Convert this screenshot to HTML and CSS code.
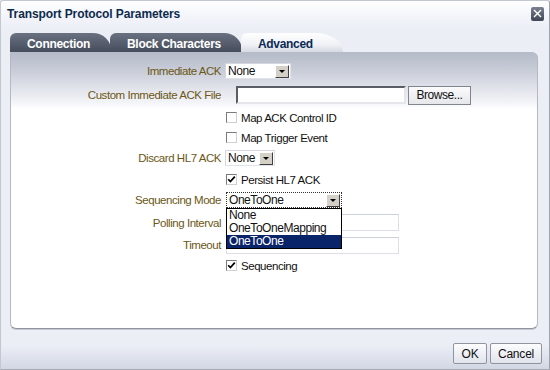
FILE: index.html
```html
<!DOCTYPE html>
<html lang="en">
<head>
    <meta charset="UTF-8">
    <title>Transport Protocol Parameters</title>
    <link rel="stylesheet" href="styles.css">
</head>
<body>
    <div class="dialog">
        <div class="titlebar">
            <span class="title">Transport Protocol Parameters</span>
            <span class="close-btn">
                <svg width="9" height="9" viewBox="0 0 9 9"><path d="M1 1L8 8M8 1L1 8" stroke="#fff" stroke-width="1.4"/></svg>
            </span>
        </div>

        <div class="tabs">
            <div class="tab">Connection</div>
            <div class="tab">Block Characters</div>
            <div class="tab active">Advanced</div>
        </div>

        <div class="panel">
            <div class="form">
                <label class="label">Immediate ACK</label>
                <div class="field">
                    <div class="select sel-ack"><span class="select-text">None</span><span class="select-arrow"></span></div>
                </div>

                <label class="label">Custom Immediate ACK File</label>
                <div class="field">
                    <div class="file-input"></div>
                    <div class="btn browse">Browse...</div>
                </div>

                <span></span>
                <div class="field check"><span class="box"></span>Map ACK Control ID</div>

                <span></span>
                <div class="field check"><span class="box"></span>Map Trigger Event</div>

                <label class="label">Discard HL7 ACK</label>
                <div class="field">
                    <div class="select sel-discard"><span class="select-text">None</span><span class="select-arrow"></span></div>
                </div>

                <span></span>
                <div class="field check">
                    <span class="box"><svg width="9" height="9" viewBox="0 0 9 9"><path d="M1.2 4.2L3.4 6.6L7.8 1.6" fill="none" stroke="#000" stroke-width="1.7"/></svg></span>Persist HL7 ACK
                </div>

                <label class="label">Sequencing Mode</label>
                <div class="field">
                    <div class="select sel-mode focused">
                        <span class="select-text">OneToOne</span><span class="select-arrow"></span>
                        <div class="dropdown">
                            <div class="option">None</div>
                            <div class="option">OneToOneMapping</div>
                            <div class="option selected">OneToOne</div>
                        </div>
                    </div>
                </div>

                <label class="label">Polling Interval</label>
                <div class="field"><div class="text-input"></div></div>

                <label class="label">Timeout</label>
                <div class="field"><div class="text-input"></div></div>

                <span></span>
                <div class="field check">
                    <span class="box"><svg width="9" height="9" viewBox="0 0 9 9"><path d="M1.2 4.2L3.4 6.6L7.8 1.6" fill="none" stroke="#000" stroke-width="1.7"/></svg></span>Sequencing
                </div>
            </div>
        </div>

        <div class="footer">
            <div class="btn footer-btn ok">OK</div>
            <div class="btn footer-btn cancel">Cancel</div>
        </div>
    </div>
</body>
</html>
```

FILE: styles.css
```css
body {
    margin: 0;
    background-color: #eceef6;
    font-family: "Liberation Sans", Arial, sans-serif;
}

.dialog {
    width: 550px;
    height: 370px;
    box-sizing: border-box;
    border: 1px solid #c3c7d0;
    border-right-color: #9da2ac;
    border-bottom-color: #a4a9b4;
    border-radius: 3px 3px 0 0;
    background: linear-gradient(#ffffff 0, #f1f3f9 18px, #eceef6 30px, #eceef6 344px, #d2d7e4 100%);
    display: flex;
    flex-direction: column;
}

.titlebar {
    height: 25px;
    display: flex;
    align-items: center;
    padding: 0 5px 0 6px;
}

.title {
    font-size: 12px;
    font-weight: bold;
    color: #0d2b4e;
    letter-spacing: -0.1px;
}

.close-btn {
    margin-left: auto;
    width: 13px;
    height: 14px;
    border-radius: 2px;
    background: linear-gradient(#7a8292, #3e4656);
    display: flex;
    align-items: center;
    justify-content: center;
}

/* Tabs */
.tabs {
    display: flex;
    margin: 7px 0 0 9px;
    height: 19px;
}

.tab {
    height: 19px;
    box-sizing: border-box;
    padding: 5px 21px 0 17px;
    font-size: 12px;
    font-weight: bold;
    letter-spacing: -0.3px;
    line-height: 13px;
    color: #fff;
    background: linear-gradient(#6a7282, #454d5c);
    border-radius: 6px 18px 0 0 / 6px 17px 0 0;
    margin-right: -1px;
}

.tab.active {
    color: #0b2a54;
    padding-right: 30px;
    background: linear-gradient(#ffffff, #f1f2f6 60%, #d6d9e2);
    border-radius: 6px 28px 0 0 / 6px 19px 0 0;
}

/* Content panel */
.panel {
    height: 277px;
    box-sizing: border-box;
    margin: 0 11px 0 9px;
    border: 1px solid #b3b8c4;
    border-top-color: #b7bcc9;
    border-bottom-color: #8e939e;
    border-radius: 0 6px 6px 6px;
    box-shadow: 0 1px 0 #c6cad4;
    background: linear-gradient(#b6bbc9 0, #c9cdd8 18px, #e2e4eb 36px, #f4f5f8 50px, #ffffff 56px);
}

.form {
    display: grid;
    grid-template-columns: 210px 1fr;
    grid-template-rows: 24px 24px 21px 19px 22px 21px 20px 25px 20px 21px;
    column-gap: 5px;
    align-items: center;
    padding-top: 6px;
    font-size: 11.5px;
    letter-spacing: -0.45px;
}

.label {
    text-align: right;
    color: #6b5716;
}

.field {
    display: flex;
    align-items: center;
    color: #111;
}

/* Select boxes */
.select {
    position: relative;
    height: 16px;
    box-sizing: border-box;
    display: flex;
    align-items: center;
    background-color: #fff;
    border: 1px solid #e1e3ea;
    border-top-color: #d3d6df;
    border-left-color: #d3d6df;
}

.sel-ack {
    width: 66px;
    margin-left: -1px;
}

.sel-discard {
    width: 50px;
    margin-left: -1px;
}

.sel-mode {
    width: 116px;
}

.select.focused {
    border: 1px dotted #333;
}

.select-text {
    flex: 1;
    padding-left: 2px;
    font-size: 12px;
}

.select-arrow {
    width: 14px;
    height: 13px;
    margin-right: 1px;
    background-color: #d4d0c8;
    border: 1px solid;
    border-color: #fff #404040 #404040 #fff;
    box-sizing: border-box;
    position: relative;
}

.select-arrow::after {
    content: "";
    position: absolute;
    left: 3px;
    top: 4px;
    border-left: 3px solid transparent;
    border-right: 3px solid transparent;
    border-top: 3px solid #000;
}

.dropdown {
    position: absolute;
    top: 15px;
    left: -1px;
    width: 116px;
    box-sizing: border-box;
    border: 1px solid #000;
    background-color: #fff;
    z-index: 2;
}

.option {
    height: 13px;
    line-height: 13px;
    padding-left: 2px;
    font-size: 12px;
}

.option.selected {
    background-color: #0a246a;
    color: #fff;
}

/* Inputs */
.file-input {
    width: 170px;
    height: 18px;
    box-sizing: border-box;
    margin-left: 10px;
    background-color: #fff;
    border: 2px solid;
    border-color: #5a5d66 #e4e6ec #e4e6ec #5a5d66;
}

.text-input {
    width: 173px;
    height: 17px;
    box-sizing: border-box;
    background-color: #fff;
    border: 1px solid #dcdfe8;
    border-top-color: #cdd1dc;
}

.btn {
    box-sizing: border-box;
    display: flex;
    align-items: center;
    justify-content: center;
    color: #111;
    background: linear-gradient(#fbfbfc, #e6e7ea);
    border: 1px solid #80848c;
}

.browse {
    width: 63px;
    height: 19px;
    margin-left: 2px;
    font-size: 12px;
}

/* Checkboxes */
.check {
    gap: 4px;
}

.box {
    width: 11px;
    height: 11px;
    box-sizing: border-box;
    background-color: #fff;
    border: 1px solid;
    border-color: #7b7b7b #cfd0d4 #cfd0d4 #7b7b7b;
    display: flex;
    align-items: center;
    justify-content: center;
}

/* Footer */
.footer {
    display: flex;
    justify-content: flex-end;
    gap: 3px;
    padding: 14px 7px 0 0;
}

.footer-btn {
    height: 21px;
    font-size: 12px;
    letter-spacing: -0.2px;
    border-color: #8f949f;
    border-radius: 2px;
    background: linear-gradient(#fdfdfe, #eef0f5 50%, #e1e4ec);
}

.ok {
    width: 34px;
}

.cancel {
    width: 52px;
}
```
